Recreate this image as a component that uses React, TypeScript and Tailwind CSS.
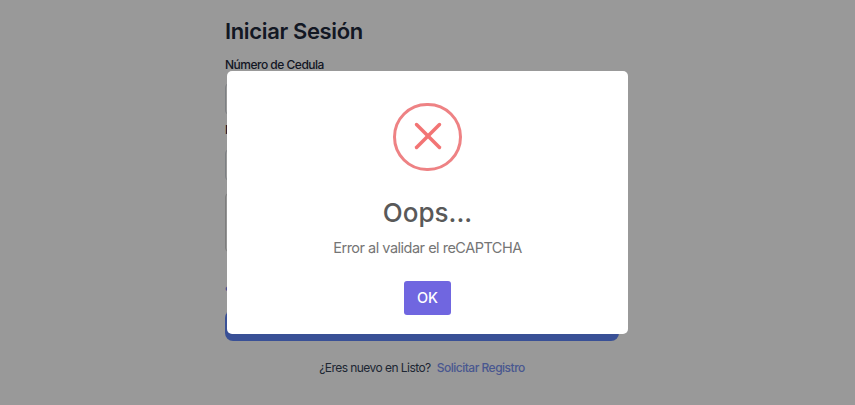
import { X } from "lucide-react";

export default function App() {
  return (
    <div className="relative h-[405px] w-[855px] overflow-hidden bg-white font-['Inter',sans-serif]">
      <div className="ml-[225px] flex w-[394px] flex-col pt-[16px]">
        <h1 className="text-[22px] leading-[30px] font-semibold tracking-[-0.35px] text-[#1e293b]">Iniciar Sesión</h1>
        <label className="mt-[11px] text-[12px] leading-[16px] font-medium tracking-[-0.5px] text-[#1e293b]">Número de Cedula</label>
        <div className="mt-[9px] h-[34px] rounded-md border border-[#d1d5db]" />
        <label className="mt-[6px] text-[12px] leading-[16px] font-medium tracking-[-0.5px] text-[#1e293b]">Nombre</label>
        <div className="mt-[10px] h-[34px] rounded-md border border-[#d1d5db]" />
        <div className="mt-[11px] h-[59px] w-[304px] rounded-sm border border-[#d3d3d3] bg-[#f9f9f9]" />
        <a className="mt-[25px] text-[12px] leading-[16px] font-medium text-[#6b86f0]">¿Olvidaste tu contraseña?</a>
        <button className="mt-[17px] h-[31px] rounded-lg bg-[#6086fa]" />
        <p className="mt-[18px] flex justify-center gap-[6px] text-[12px] leading-[18px] text-[#334155]">
          <span className="tracking-[-0.55px]">¿Eres nuevo en Listo?</span>
          <a className="font-medium tracking-[-0.5px] text-[#7a92f0]">Solicitar Registro</a>
        </p>
      </div>

      <div className="absolute inset-0 flex items-center justify-center bg-black/40">
        <div className="flex h-[263px] w-[401px] flex-col items-center rounded-[5px] bg-white pt-[32px]">
          <div className="flex h-[68px] w-[69px] items-center justify-center rounded-full border-[3px] border-[#ee8284]">
            <X className="-mt-[2px] h-[46px] w-[46px] text-[#f27474]" strokeWidth={1.8} />
          </div>
          <h2 className="mt-[25px] text-[26px] leading-[34px] font-medium text-[#595959]">Oops...</h2>
          <p className="mt-[6px] text-[14.5px] leading-[24px] tracking-[-0.5px] text-[#757575]">Error al validar el reCAPTCHA</p>
          <button className="mt-[21px] h-[34px] w-[47px] rounded-[3px] bg-[#7066e0] text-[14.5px] font-medium text-white">OK</button>
        </div>
      </div>
    </div>
  );
}
